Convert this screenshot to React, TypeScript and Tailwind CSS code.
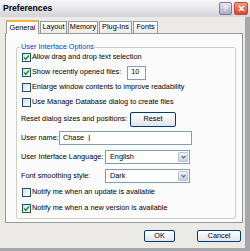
import React from "react";

const font = { fontFamily: '"Liberation Sans", Arial, sans-serif' };

type CheckProps = { checked?: boolean; label: string };

const Check = ({ checked, label }: CheckProps) => (
  <label className="flex items-center gap-[1px] text-[7.3px] text-black">
    <span className="flex h-[9px] w-[9px] items-center justify-center border border-[#1c5180] bg-gradient-to-br from-[#dcdcd7] to-white">
      {checked && (
        <svg width="7" height="7" viewBox="0 0 7 7">
          <path d="M1 3.5 L2.8 5.3 L6 1.5" fill="none" stroke="#21a121" strokeWidth="1.6" />
        </svg>
      )}
    </span>
    <span>{label}</span>
  </label>
);

const Select = ({ value }: { value: string }) => (
  <div className="flex h-[14px] w-[85px] items-center border border-[#7f9db9] bg-white">
    <span className="flex-1 pl-[4px] text-[7.3px]">{value}</span>
    <span className="mr-[1px] flex h-[10px] w-[10px] items-center justify-center rounded-[1px] border border-[#b8c4dc] bg-gradient-to-b from-[#f4f5fa] to-[#c9d0e2]">
      <svg width="5" height="4" viewBox="0 0 5 4">
        <path d="M0.5 0.8 L2.5 2.8 L4.5 0.8" fill="none" stroke="#4d6185" strokeWidth="1.2" />
      </svg>
    </span>
  </div>
);

const Button = ({ label, className }: { label: string; className: string }) => (
  <button
    className={`flex items-center justify-center rounded-[2px] border border-[#003c74] bg-gradient-to-b from-white to-[#e3e3eb] text-[7.3px] text-black ${className}`}
  >
    {label}
  </button>
);

const tabs = [
  { name: "Layout", w: "w-[27px]" },
  { name: "Memory", w: "w-[30px]" },
  { name: "Plug-Ins", w: "w-[33px]" },
  { name: "Fonts", w: "w-[25px]" },
];

export default function App() {
  return (
    <div className="flex h-[251px] w-[250px] flex-col bg-[#a7a6aa]" style={font}>
      <div className="flex h-[17px] items-center justify-between bg-gradient-to-b from-[#f7f7f9] via-[#e6e6ec] to-[#d2d2da] pl-[3px] pr-[2px]">
        <span className="text-[8.6px] font-bold text-black">Preferences</span>
        <div className="flex gap-[2px]">
          <span className="flex h-[13px] w-[13px] items-center justify-center rounded-[2px] border border-[#7b7d9a] bg-gradient-to-b from-[#e8e9f1] to-[#a9abc1] text-[8px] font-bold text-white">
            ?
          </span>
          <span className="flex h-[13px] w-[14px] items-center justify-center rounded-[2px] border border-[#c44636] bg-gradient-to-b from-[#f29a84] to-[#d8422a]">
            <svg width="7" height="7" viewBox="0 0 7 7">
              <path d="M1 1 L6 6 M6 1 L1 6" stroke="white" strokeWidth="1.6" />
            </svg>
          </span>
        </div>
      </div>

      <div className="flex h-[231px] w-[245px] flex-col bg-[#eceae7]">
        <div className="flex items-end pl-[6px] pt-[3px]">
          <div className="z-10 -mb-[1px] flex h-[14px] w-[33px] items-start justify-center border-x border-t-[2px] border-x-[#919b9c] border-t-[#f2b43a] bg-[#fcfcfe] pt-[1px] text-[7.3px]">
            General
          </div>
          {tabs.map((t) => (
            <div
              key={t.name}
              className={`ml-[1px] flex h-[12px] ${t.w} items-center justify-center border border-b-0 border-[#919b9c] bg-gradient-to-b from-white to-[#ecebe6] text-[7.3px]`}
            >
              {t.name}
            </div>
          ))}
        </div>

        <div className="ml-[5px] flex h-[190px] w-[238px] flex-col border border-[#919b9c] bg-[#fbfbfb] pl-[10px] pt-[13px]">
          <div className="relative flex h-[172px] w-[220px] flex-col rounded-[2px] border border-[#d0d0bf] pl-[5px] pt-[2px]">
            <span className="absolute -top-[6px] left-[3px] bg-[#fbfbfb] px-[1px] text-[7.3px] text-[#0046d5]">
              User Interface Options
            </span>
            <div className="flex flex-col">
              <div className="flex h-[15px] items-center">
                <Check checked label="Allow drag and drop text selection" />
              </div>
              <div className="flex h-[15px] items-center">
                <Check checked label="Show recently opened files:" />
                <div className="ml-[6px] flex h-[14px] w-[19px] items-center border border-[#7f9db9] bg-white pl-[3px] text-[7.3px]">
                  10
                </div>
              </div>
              <div className="flex h-[15px] items-center">
                <Check label="Enlarge window contents to improve readability" />
              </div>
              <div className="flex h-[15px] items-center">
                <Check label="Use Manage Database dialog to create files" />
              </div>
            </div>

            <div className="-ml-[1px] mt-[2px] flex h-[15px] items-center text-[7.3px]">
              <span className="w-[109px]">Reset dialog sizes and positions:</span>
              <Button label="Reset" className="h-[15px] w-[46px]" />
            </div>

            <div className="-ml-[1px] mt-[4px] flex h-[14px] items-center text-[7.3px]">
              <span className="w-[38px]">User name:</span>
              <div className="flex h-[14px] w-[133px] items-center border border-[#7f9db9] bg-white pl-[3px]">
                Chase
                <span className="ml-[4px] text-[9px] font-light leading-none text-[#333]">I</span>
              </div>
            </div>

            <div className="-ml-[1px] mt-[5px] flex h-[14px] items-center text-[7.3px]">
              <span className="w-[84px]">User Interface Language:</span>
              <Select value="English" />
            </div>

            <div className="-ml-[1px] mt-[5px] flex h-[14px] items-center text-[7.3px]">
              <span className="w-[84px]">Font smoothing style:</span>
              <Select value="Dark" />
            </div>

            <div className="mt-[1px] flex flex-col">
              <div className="flex h-[16px] items-center">
                <Check label="Notify me when an update is available" />
              </div>
              <div className="flex h-[16px] items-center">
                <Check checked label="Notify me when a new version is available" />
              </div>
            </div>
          </div>
        </div>

        <div className="mt-[7px] flex gap-[22px] pl-[144px]">
          <Button label="OK" className="h-[12px] w-[31px]" />
          <Button label="Cancel" className="h-[12px] w-[44px]" />
        </div>
      </div>
    </div>
  );
}
